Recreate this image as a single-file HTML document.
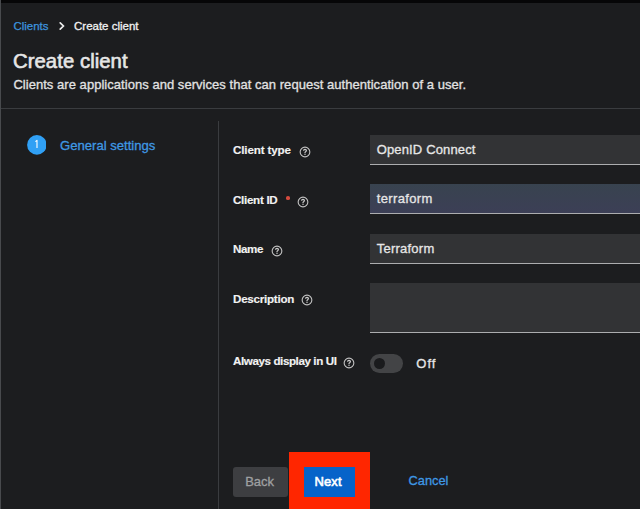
<!DOCTYPE html>
<html><head><meta charset="utf-8">
<style>
*{margin:0;padding:0;box-sizing:border-box}
html,body{width:640px;height:509px;overflow:hidden;background:#1c1d1f;font-family:"Liberation Sans",sans-serif}
.a{position:absolute;white-space:nowrap;line-height:1}
#top{position:absolute;left:0;top:0;width:640px;height:3px;background:#060607}
#lft{position:absolute;left:0;top:0;width:1px;height:509px;background:#484a4d}
.hr{position:absolute;left:1px;top:108px;width:639px;height:1px;background:#3a3c3f}
.vr{position:absolute;left:218px;top:121px;width:1px;height:388px;background:#3a3c3f}
.bc1{left:13.4px;top:20.8px;font-size:11.5px;color:#3d94de;-webkit-text-stroke:0.25px #3d94de}
.bc2{left:74px;top:20.8px;font-size:11.5px;color:#f2f2f2;-webkit-text-stroke:0.3px #f2f2f2}
.chev{position:absolute;left:58px;top:21px}
.title{left:13px;top:50.6px;font-size:20.3px;letter-spacing:0.06px;color:#e6e6e6;-webkit-text-stroke:0.6px #e6e6e6}
.sub{left:13.4px;top:77.7px;font-size:13px;letter-spacing:0.04px;color:#e2e2e2;-webkit-text-stroke:0.3px #e2e2e2}
.circ{position:absolute;left:26.7px;top:134.9px;width:19.8px;height:19.8px}
.gs{left:60px;top:138.9px;font-size:13.1px;color:#3f98e3;-webkit-text-stroke:0.3px #3f98e3}
.lab{left:233px;font-size:11.6px;font-weight:bold;color:#f2f2f2;-webkit-text-stroke:0.15px #f2f2f2}
.help{position:absolute;width:12px;height:12px}
.inp{position:absolute;left:370px;width:280px;height:30px;background:#323335;border-bottom:1px solid #acadaf}
.inp span{position:absolute;left:6.7px;top:8px;font-size:13px;color:#e6e6e6;line-height:1;-webkit-text-stroke:0.3px #e6e6e6}
.tog{position:absolute;left:370px;top:354px;width:33px;height:19px;border-radius:9.5px;background:#434446}
.knob{position:absolute;left:374.2px;top:358px;width:11.2px;height:11.2px;border-radius:50%;background:#1a1b1d}
.off{left:416.3px;top:356.8px;font-size:13px;letter-spacing:1px;color:#e6e6e6;-webkit-text-stroke:0.3px #e6e6e6}
.back{position:absolute;left:233px;top:467px;width:55px;height:30px;border-radius:3px;background:#3d3e41}
.back span{position:absolute;left:12.2px;top:7.8px;font-size:13px;color:#9fa0a2;line-height:1;-webkit-text-stroke:0.3px #9fa0a2}
.red{position:absolute;left:289px;top:452px;width:81px;height:57px;background:#ff2600}
.next{position:absolute;left:304px;top:467px;width:51px;height:30px;background:#0663c9}
.next span{position:absolute;left:10.5px;top:7.6px;font-size:13px;color:#fff;line-height:1;letter-spacing:0.1px;-webkit-text-stroke:0.6px #fff}
.cancel{left:408.6px;top:475.2px;font-size:12.8px;color:#3e98e4;-webkit-text-stroke:0.3px #3e98e4}
.req{position:absolute;color:#e0473a;font-size:10px;font-weight:bold}
</style></head><body>
<div id="top"></div>
<div id="lft"></div>

<div class="a bc1">Clients</div>
<svg class="chev" width="8" height="10" viewBox="0 0 8 10"><path d="M2.2 1.9 L5.4 5 L2.2 8.1" stroke="#ececec" stroke-width="1.7" fill="none" stroke-linecap="round"/></svg>
<div class="a bc2">Create client</div>
<div class="a title">Create client</div>
<div class="a sub">Clients are applications and services that can request authentication of a user.</div>
<div class="hr"></div>
<div class="vr"></div>

<svg class="circ" viewBox="0 0 20 20"><circle cx="10" cy="10" r="9.9" fill="#30a0f5"/><path d="M8.5 6.7 L10.1 5.4 L10.1 13.1" stroke="#fff" stroke-width="1.1" fill="none" stroke-linejoin="round"/></svg>
<div class="a gs">General settings</div>

<div class="a lab" style="top:143.9px;letter-spacing:-0.14px">Client type</div>
<div class="a lab" style="top:193.5px;letter-spacing:-0.29px">Client ID</div>
<div class="a lab" style="top:243.1px;letter-spacing:-0.4px">Name</div>
<div class="a lab" style="top:293.2px;letter-spacing:-0.24px">Description</div>
<div class="a lab" style="top:355px;letter-spacing:-0.4px">Always display in UI</div>

<svg class="help" style="left:298.5px;top:145.8px" viewBox="0 0 12 12"><circle cx="6" cy="6" r="4.85" stroke="#c2c2c2" stroke-width="1.1" fill="none"/><path d="M4.6 4.7 Q4.6 3.3 6 3.3 Q7.4 3.3 7.4 4.5 Q7.4 5.3 6.55 5.7 Q6 6 6 6.7 L6 7" stroke="#c8c8c8" stroke-width="1.25" fill="none"/><circle cx="6" cy="8.3" r="0.72" fill="#c8c8c8"/></svg><svg class="help" style="left:296.5px;top:195.6px" viewBox="0 0 12 12"><circle cx="6" cy="6" r="4.85" stroke="#c2c2c2" stroke-width="1.1" fill="none"/><path d="M4.6 4.7 Q4.6 3.3 6 3.3 Q7.4 3.3 7.4 4.5 Q7.4 5.3 6.55 5.7 Q6 6 6 6.7 L6 7" stroke="#c8c8c8" stroke-width="1.25" fill="none"/><circle cx="6" cy="8.3" r="0.72" fill="#c8c8c8"/></svg><svg class="help" style="left:270.5px;top:244.7px" viewBox="0 0 12 12"><circle cx="6" cy="6" r="4.85" stroke="#c2c2c2" stroke-width="1.1" fill="none"/><path d="M4.6 4.7 Q4.6 3.3 6 3.3 Q7.4 3.3 7.4 4.5 Q7.4 5.3 6.55 5.7 Q6 6 6 6.7 L6 7" stroke="#c8c8c8" stroke-width="1.25" fill="none"/><circle cx="6" cy="8.3" r="0.72" fill="#c8c8c8"/></svg><svg class="help" style="left:300.7px;top:294.0px" viewBox="0 0 12 12"><circle cx="6" cy="6" r="4.85" stroke="#c2c2c2" stroke-width="1.1" fill="none"/><path d="M4.6 4.7 Q4.6 3.3 6 3.3 Q7.4 3.3 7.4 4.5 Q7.4 5.3 6.55 5.7 Q6 6 6 6.7 L6 7" stroke="#c8c8c8" stroke-width="1.25" fill="none"/><circle cx="6" cy="8.3" r="0.72" fill="#c8c8c8"/></svg><svg class="help" style="left:342.7px;top:356.9px" viewBox="0 0 12 12"><circle cx="6" cy="6" r="4.85" stroke="#c2c2c2" stroke-width="1.1" fill="none"/><path d="M4.6 4.7 Q4.6 3.3 6 3.3 Q7.4 3.3 7.4 4.5 Q7.4 5.3 6.55 5.7 Q6 6 6 6.7 L6 7" stroke="#c8c8c8" stroke-width="1.25" fill="none"/><circle cx="6" cy="8.3" r="0.72" fill="#c8c8c8"/></svg><div style="position:absolute;left:286.2px;top:196.2px;width:3.7px;height:3.7px;border-radius:50%;background:#d44b3e"></div>
<div class="inp" style="top:135px"><span style="letter-spacing:0.15px">OpenID Connect</span></div>
<div class="inp" style="top:184px;background:linear-gradient(#38434f,#3c3f56)"><span style="letter-spacing:0.37px">terraform</span></div>
<div class="inp" style="top:234px"><span style="letter-spacing:0.24px">Terraform</span></div>
<div class="inp" style="top:283px;height:50px"></div>

<div class="tog"></div><div class="knob"></div>
<div class="a off">Off</div>

<div class="back"><span>Back</span></div>
<div class="red"></div>
<div class="next"><span>Next</span></div>
<div class="a cancel">Cancel</div>
</body></html>
